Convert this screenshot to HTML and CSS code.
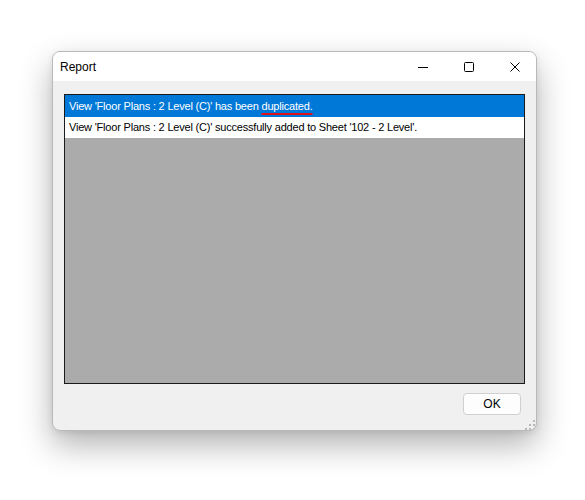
FILE: index.html
```html
<!DOCTYPE html>
<html>
<head>
<meta charset="utf-8">
<link rel="stylesheet" href="styles.css">
</head>
<body>
<div class="desktop">
  <div class="window">
    <div class="titlebar">
      <div class="title">Report</div>
      <div class="controls">
        <div class="ctl"><svg width="10" height="10" viewBox="0 0 10 10"><path d="M0 5.5H10" stroke="#000" stroke-width="1"/></svg></div>
        <div class="ctl"><svg width="10" height="10" viewBox="0 0 10 10"><rect x="0.5" y="0.5" width="9" height="9" rx="1" fill="none" stroke="#000" stroke-width="1"/></svg></div>
        <div class="ctl"><svg width="10" height="10" viewBox="0 0 10 10"><path d="M0.5 0.5L9.5 9.5M9.5 0.5L0.5 9.5" stroke="#000" stroke-width="1"/></svg></div>
      </div>
    </div>
    <div class="client">
      <div class="listbox">
        <div class="row selected">View 'Floor Plans : 2 Level (C)' has been <span class="mark">duplicated.</span></div>
        <div class="row">View 'Floor Plans : 2 Level (C)' successfully added to Sheet '102 - 2 Level'.</div>
      </div>
      <div class="actions">
        <button class="btn">OK</button>
      </div>
      <svg class="grip" width="10" height="10" viewBox="0 0 10 10">
        <rect x="8" y="0" width="2" height="2" fill="#b8b8b8"/>
        <rect x="4" y="4" width="2" height="2" fill="#b8b8b8"/>
        <rect x="8" y="4" width="2" height="2" fill="#b8b8b8"/>
        <rect x="0" y="8" width="2" height="2" fill="#b8b8b8"/>
        <rect x="4" y="8" width="2" height="2" fill="#b8b8b8"/>
        <rect x="8" y="8" width="2" height="2" fill="#b8b8b8"/>
      </svg>
    </div>
  </div>
</div>
</body>
</html>
```

FILE: styles.css
```css
html, body {
  margin: 0;
  padding: 0;
  background: #ffffff;
}
body {
  font-family: "Liberation Sans", Arial, sans-serif;
  font-size: 11px;
  color: #000;
}
.desktop {
  box-sizing: border-box;
  min-height: 500px;
  padding: 51px 0 0 52px;
}
.window {
  width: 485px;
  height: 380px;
  box-sizing: border-box;
  border: 1px solid #b9b9b9;
  border-radius: 8px;
  overflow: hidden;
  background: #f0f0f0;
  display: flex;
  flex-direction: column;
  box-shadow: 0 14px 32px rgba(0,0,0,0.30), 0 2px 6px rgba(0,0,0,0.08);
}
.titlebar {
  height: 29px;
  flex: none;
  background: #ffffff;
  display: flex;
  align-items: center;
}
.title {
  flex: 1;
  padding-left: 7px;
  font-size: 12px;
  padding-top: 1px;
}
.controls {
  display: flex;
  height: 100%;
  margin-right: -2px;
}
.ctl {
  width: 46px;
  height: 100%;
  display: flex;
  align-items: center;
  justify-content: center;
}
.client {
  flex: 1;
  position: relative;
  display: flex;
  flex-direction: column;
  padding: 13px 11px 16px 11px;
}
.listbox {
  height: 290px;
  box-sizing: border-box;
  border: 1px solid #1a1a1a;
  background: #ababab;
  display: flex;
  flex-direction: column;
}
.row {
  height: 21px;
  line-height: 21px;
  padding-left: 4px;
  background: #ffffff;
  white-space: nowrap;
  letter-spacing: -0.2px;
}
.row.selected {
  height: 22px;
  line-height: 22px;
  background: #0078d7;
  color: #ffffff;
}
.mark {
  text-decoration: underline;
  text-decoration-color: #e0101a;
  text-decoration-thickness: 2px;
  text-underline-offset: 3px;
}
.actions {
  display: flex;
  justify-content: flex-end;
  padding-top: 9px;
  padding-right: 4px;
}
.btn {
  width: 58px;
  height: 22px;
  box-sizing: border-box;
  border: 1px solid #d0d0d0;
  border-radius: 4px;
  background: #fdfdfd;
  font-family: "Liberation Sans", Arial, sans-serif;
  font-size: 12px;
  color: #000;
  padding: 0;
}
.grip {
  position: absolute;
  right: 1px;
  bottom: 1px;
}
```
